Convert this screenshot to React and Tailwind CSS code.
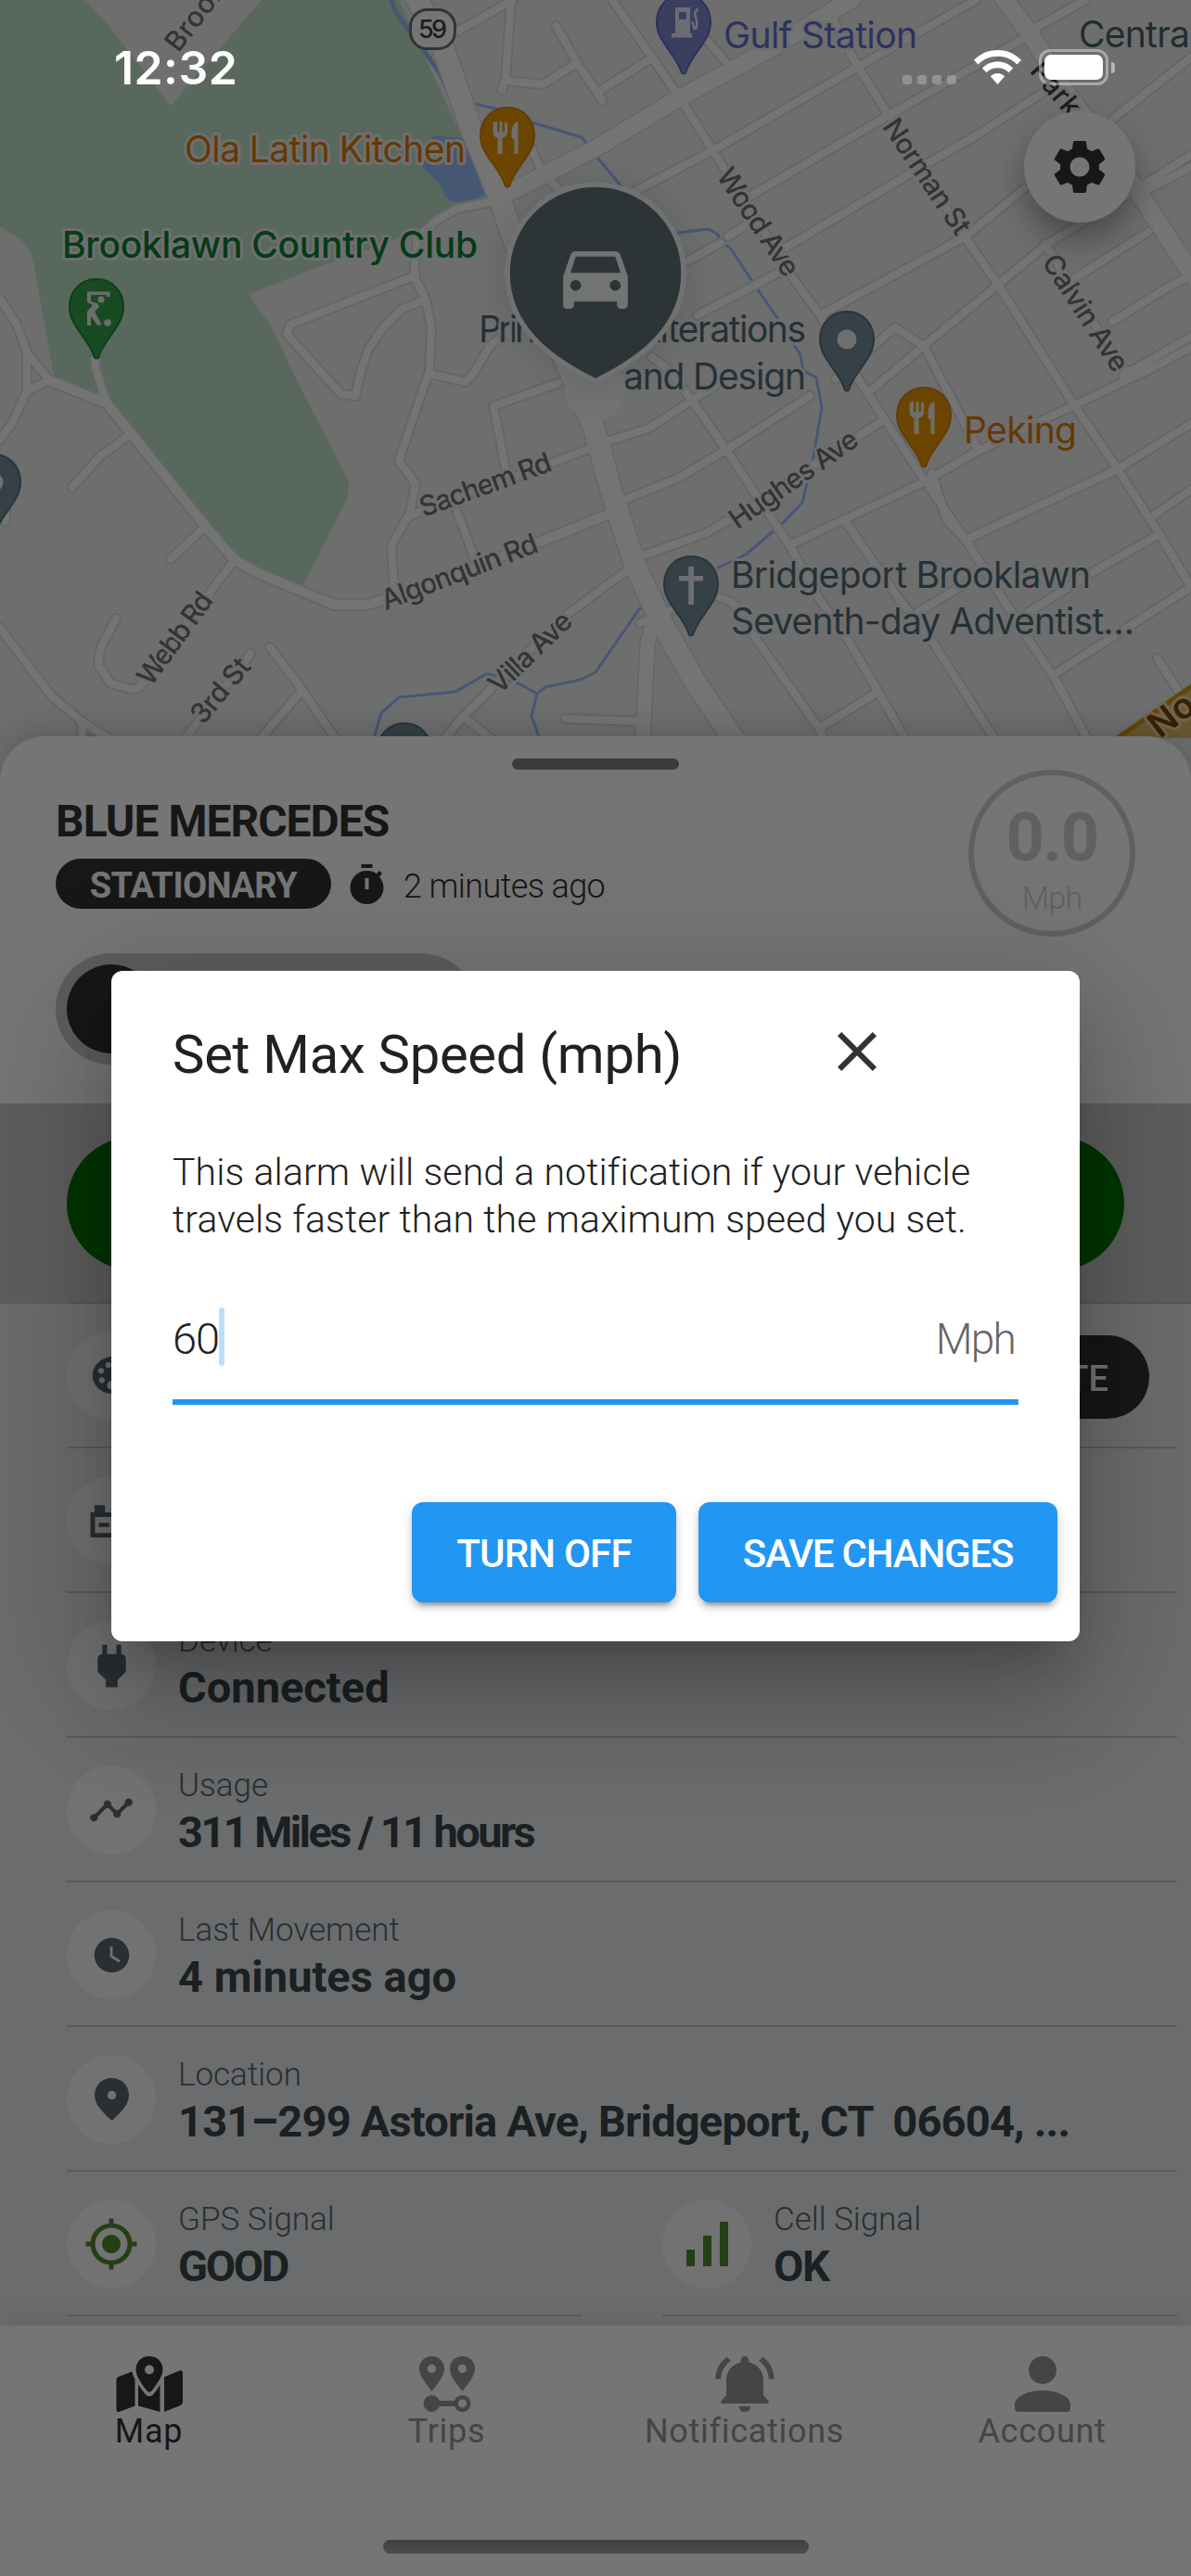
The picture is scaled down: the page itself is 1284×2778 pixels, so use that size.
import React from "react";
import { MdSettings, MdDirectionsCar, MdClose, MdTimeline, MdWatchLater, MdMyLocation } from "react-icons/md";
import { IoColorPalette } from "react-icons/io5";

/* ---------- Map ---------- */

const MINOR_ROADS = [
  "491,35 553,0",
  "551,0 545,85 541,97",
  "545,87 585,91 622,68 650,109",
  "600,28 622,68",
  "648,97 699,65",
  "573,160 585,187 602,203",
  "528,218 493,225 471,237 450,257 446,297 459,323 465,353 463,400 448,443 430,497 448,522 442,553 422,588 425,640",
  "463,403 502,412 512,400 528,373 552,355",
  "448,297 313,350 309,360 345,400 368,425 383,427 389,400 397,377 413,353 434,333 459,323",
  "0,322 18,350 29,380 29,422 12,458 0,474",
  "29,380 53,410",
  "29,422 53,410",
  "102,388 104,400 115,435",
  "141,468 108,492 78,525",
  "221,568 184,603",
  "252,605 227,638 150,742 141,743 119,737 106,717 108,700 125,667",
  "0,677 55,750 88,778 123,800",
  "88,780 89,800",
  "270,705 197,800",
  "291,698 325,743 364,800",
  "325,745 278,800",
  "442,556 598,498 640,482",
  "602,413 532,438 545,505",
  "493,552 512,603",
  "683,610 642,640 606,667 499,773 477,800",
  "502,775 534,800",
  "610,775 689,778",
  "6,540 6,562",
  "648,478 699,462 746,432 777,412",
  "671,540 732,515 783,485 873,427",
  "685,602 761,575 798,553 929,468 953,453",
  "901,409 965,353 996,373 1076,307 1129,263 1227,203 1284,167",
  "940,420 996,373 1010,400 1055,485",
  "851,588 996,520 1051,488 1158,437 1236,400 1284,375",
  "1041,582 1203,507 1284,457",
  "1135,728 1284,633",
  "1109,660 1178,617 1248,577",
  "1242,557 1284,528",
  "990,660 1035,633",
  "660,0 703,62 734,107 769,163 855,300 884,340 928,413 996,517 1041,582 1109,690 1135,728 1174,800",
  "703,385 722,400 746,432 783,485 851,588 884,647 916,693 945,743 978,800",
  "912,563 970,647 1006,693 1074,800",
  "765,640 790,650 818,693 884,787 889,800",
  "884,785 945,747",
  "690,672 730,655",
  "762,43 785,70",
  "896,18 925,72 957,123 1041,257 1076,307 1133,397 1158,437 1203,503 1248,573 1284,633",
  "1127,263 1211,400 1222,400",
  "683,207 769,162 925,72 1052,0",
  "806,213 957,125 1101,43",
  "1113,32 1170,0",
  "785,255 812,238",
  "738,283 777,262",
  "847,267 1002,175 1051,147 1129,97",
  "752,340 847,290",
  "884,340 1041,255 1105,203",
  "1200,128 1284,62",
  "1232,207 1284,180",
  "1154,303 1238,250",
  "1199,347 1262,308 1284,297",
  "1211,405 1284,363",
  "1005,510 1020,560 1041,582",
  "1248,710 1277,756",
];
const CLUB_ROAD = "53,410 115,435 141,467 221,567 252,603 278,618 360,652 395,652 414,647 581,585 642,560 660,553";
const MAIN_ROAD = "448,-4 477,50 506,133 536,207 560,275 614,400 640,460 660,533 685,610 714,673 748,733 793,800";
const DIAGONAL = "545,210 642,160 730,107 830,53 920,-2";
const PARK_AVE = "1082,-2 1113,40 1150,100 1227,207 1290,303";
const BROOK_AVE = "703,676 698,695 693,800";

const STREAMS = [
  "513,112 537,118 560,130 577,133 627,148 640,165 669,200",
  "730,251 764,247 774,253 777,262 787,267 812,305 838,343 863,383 866,400 880,407 886,439 877,492 865,542 843,565 804,598 773,613",
  "716,645 689,657 642,725 626,733 588,741 579,748 559,737 528,727 524,727 491,746 430,752 411,769 402,800",
  "579,748 573,772 583,800",
];

const MAP_LABELS = [
  { t: "Ola Latin Kitchen", x: 199, y: 175, w: 303, s: 39, c: "#df7b06" },
  { t: "Brooklawn Country Club", x: 67, y: 278, w: 448, s: 39, c: "#0d8232", wt: 500 },
  { t: "Gulf Station", x: 780, y: 52, w: 209, s: 39, c: "#626fce" },
  { t: "Centra", x: 1163, y: 51, w: 120, s: 39, c: "#48616c" },
  { t: "Prin", x: 516, y: 369, w: 62, s: 39, c: "#516c79" },
  { t: "Alterations", x: 686, y: 369, w: 183, s: 39, c: "#516c79" },
  { t: "and Design", x: 672, y: 420, w: 197, s: 39, c: "#516c79" },
  { t: "Peking", x: 1039, y: 478, w: 122, s: 39, c: "#df7b06" },
  { t: "Bridgeport Brooklawn", x: 788, y: 634, w: 388, s: 39, c: "#516c79" },
  { t: "Seventh-day Adventist…", x: 788, y: 684, w: 435, s: 39, c: "#516c79" },
];

const STREET_LABELS = [
  { t: "Brook", x: 210, y: 17, r: -52, w: 86 },
  { t: "Wood Ave", x: 818, y: 239, r: 56, w: 134 },
  { t: "Norman St", x: 1000, y: 190, r: 56, w: 144 },
  { t: "Calvin Ave", x: 1171, y: 337, r: 57, w: 144 },
  { t: "Park", x: 1139, y: 95, r: 50, w: 66, dark: true },
  { t: "Hughes Ave", x: 855, y: 516, r: -35, w: 162 },
  { t: "Sachem Rd", x: 523, y: 522, r: -20, w: 149 },
  { t: "Algonquin Rd", x: 495, y: 616, r: -21, w: 178 },
  { t: "Webb Rd", x: 188, y: 688, r: -54, w: 116 },
  { t: "3rd St", x: 237, y: 744, r: -50, w: 82 },
  { t: "Villa Ave", x: 571, y: 703, r: -44, w: 112 },
];

function Pin({ x, y, fill, edge, children }) {
  return (
    <g transform={`translate(${x} ${y})`}>
      <path
        d="M0 1C17 1 29 14 29 31c0 12-6 20-13 30-8 11-12 18-13.600 24-.6 2-4.200 2-4.800 0C-4 79-8 72-16 61-23 51-29 43-29 31-29 14-17 1 0 1Z"
        fill={fill}
        stroke={edge}
        strokeWidth="2"
      />
      {children}
    </g>
  );
}

function Cutlery() {
  return (
    <g fill="#f4f0ea">
      <path d="M-15.500 17v10c0 4 2.500 6 5 7v17h5V34c3-1 5.500-3 5.500-7V17h-3v10h-2.500V16h-3v11h-2.500V16Z" />
      <path d="M11.500 16C6 17 4.500 23 4.500 31c0 3 1 4 3 5v15h4Z" />
    </g>
  );
}

function CityMap() {
  return (
    <svg className="absolute inset-x-0 top-0 h-[860px] w-full" viewBox="0 0 1284 860" fontFamily="Inter, sans-serif">
      <rect width="1284" height="860" fill="#eff0f0" />
      <path
        d="M0 0H92L115 25 184 114 282 0H430L528 213 490 225 455 247 400 268 356 283 268 317 293 353 315 400 376 519 375 537 327 631 278 613 254 597 117 433 59 405 57 400 36 283 33 273Q28 262 20 257L0 244Z"
        fill="#bfe3cb"
      />
      <path d="M84 788 90 782 108 796H80Z" fill="#bfe3cb" />
      <path d="M455 180 467 146 504 150 523 208Q521 214 489 218L480 212 473 197Z" fill="#9abdfd" />
      <g fill="none" stroke="#9abdfd" strokeWidth="3" strokeLinejoin="round">
        <polyline points="422,0 426,12 454,50 475,80 487,107" strokeWidth="5" />
        {STREAMS.map((p) => (
          <polyline key={p} points={p} />
        ))}
      </g>
      <g fill="none" stroke="#d8dcde" strokeLinejoin="round" strokeLinecap="round">
        {MINOR_ROADS.map((p) => (
          <polyline key={p} points={p} strokeWidth="12" />
        ))}
        <polyline points={CLUB_ROAD} strokeWidth="14" />
        <polyline points={BROOK_AVE} strokeWidth="18" />
        <polyline points={DIAGONAL} strokeWidth="21" />
        <polyline points={PARK_AVE} strokeWidth="22" />
        <polyline points={MAIN_ROAD} strokeWidth="26" />
      </g>
      <g fill="none" stroke="#fdfdfd" strokeLinejoin="round" strokeLinecap="round">
        {MINOR_ROADS.map((p) => (
          <polyline key={p} points={p} strokeWidth="8" />
        ))}
        <polyline points={CLUB_ROAD} strokeWidth="10" />
        <polyline points={BROOK_AVE} strokeWidth="15" />
        <polyline points={DIAGONAL} strokeWidth="18" />
        <polyline points={PARK_AVE} strokeWidth="19" />
        <polyline points={MAIN_ROAD} strokeWidth="23" />
      </g>
      <path d="M1205 796 1286 740V796Z" fill="#e0c069" />
      <path d="M1203 797 1286 739" stroke="#d99a10" strokeWidth="5" />

      <rect x="442.500" y="10.500" width="48" height="42" rx="18" fill="#fdfefe" stroke="#6e7072" strokeWidth="3" />
      <text x="466.500" y="41" fontSize="27" textAnchor="middle" textLength="31" fill="#3f4244" fontWeight="500">59</text>

      <g stroke="#eff0f0" strokeWidth="6" strokeLinejoin="round">
        {STREET_LABELS.map((l) => (
          <text
            key={l.t}
            transform={`translate(${l.x} ${l.y}) rotate(${l.r})`}
            y="11"
            fontSize="30"
            fontWeight="500"
            textAnchor="middle"
            textLength={l.w}
            fill={l.dark ? "#3c3f42" : "#6c7276"}
            className="[paint-order:stroke]"
          >
            {l.t}
          </text>
        ))}
        <text transform="translate(1263 771) rotate(-38)" y="13" fontSize="38" fontWeight="600" textAnchor="middle" fill="#7c470c" stroke="#f3dfa8" className="[paint-order:stroke]">
          No
        </text>
        {MAP_LABELS.map((l) => (
          <text key={l.t} x={l.x} y={l.y} fontSize={l.s} fontWeight={l.wt || 400} textLength={l.w} fill={l.c} className="[paint-order:stroke]">
            {l.t}
          </text>
        ))}
      </g>

      <Pin x={547} y={115} fill="#ec9900" edge="#d98412"><Cutlery /></Pin>
      <Pin x={996} y={417} fill="#ec9900" edge="#d98412"><Cutlery /></Pin>
      <Pin x={104} y={300} fill="#38a34d" edge="#168a3a">
        <path d="M-10 14.500H14.500V20H11V18H-6V25L1 27 3 31-2 36 5.500 50 1 51-6 41V51H-10V36L-4 29-10 26Z" fill="#e9efe9" />
        <circle cx="5" cy="23" r="3.500" fill="#e9efe9" />
        <circle cx="12" cy="48" r="3.800" fill="#e9efe9" />
      </Pin>
      <Pin x={737} y={-7} fill="#7f88cf" edge="#5f6bc4">
        <path d="M-9 15H7V43H9V47.500H-13V43H-9ZM-5 20V28H3V20Z" fill="#eceef6" fillRule="evenodd" />
        <path d="M8 31c4 0 2 7 4 7s3-4 2-9l-2-7 3-6" fill="none" stroke="#eceef6" strokeWidth="2.600" />
      </Pin>
      <Pin x={913} y={335} fill="#758f9c" edge="#587381"><circle cy="31" r="10.500" fill="#eff2f3" /></Pin>
      <Pin x={-7} y={489} fill="#758f9c" edge="#587381"><circle cy="31" r="10.500" fill="#eff2f3" /></Pin>
      <Pin x={436} y={779} fill="#758f9c" edge="#587381" />
      <Pin x={745} y={599} fill="#758f9c" edge="#587381">
        <path d="M-2.800 12H3V22H13V27.500H3V53H-2.800V27.500H-13V22H-2.800Z" fill="#eff2f3" />
      </Pin>

      <circle cx="642" cy="420" r="33" fill="#fafafa" />
      <path
        d="M642 199a95 95 0 0 1 95 95c0 58-44 92-95 117-51-25-95-59-95-117a95 95 0 0 1 95-95Z"
        fill="#627279"
        stroke="#f5f6f6"
        strokeWidth="5.500"
        className="drop-shadow-[0_3px_20px_rgba(0,0,0,0.14)]"
      />
      <MdDirectionsCar x={595.5} y={251.5} size={93} color="#f8fafa" />
    </svg>
  );
}

/* ---------- Icons ---------- */

const CarBattery = () => (
  <svg viewBox="0 0 24 24" className="size-[54px]" fill="currentColor">
    <path fillRule="evenodd" d="M4 4.500V8H2V20H22V8H20V4.500H15V8H9V4.500ZM4.200 10.200H19.800V17.900H4.200ZM6 13V15H11V13ZM14 13V15H15.500V16.500H17.500V15H19V13H17.500V11.500H15.500V13Z" />
  </svg>
);
const Plug = () => (
  <svg viewBox="0 0 24 24" className="size-[61px]" fill="currentColor">
    <path d="M16 7V3h-2v4h-4V3H8v4c-1 0-2 1-2 2v5.500L9.500 18v3h5v-3l3.500-3.500V9c0-1-1-2-2-2" />
  </svg>
);
const Place = () => (
  <svg viewBox="0 0 37 46" className="h-[46px] w-[37px]" fill="currentColor">
    <path fillRule="evenodd" d="M18.500 0C8 0 0 8 0 18.500 0 29 9 37 18.500 46 28 37 37 29 37 18.500 37 8 29 0 18.500 0Zm0 13.800a4.700 4.700 0 1 1 0 9.400 4.700 4.700 0 0 1 0-9.400Z" />
  </svg>
);
const Bars = () => (
  <svg viewBox="0 0 45 48" className="h-[48px] w-[45px]" fill="currentColor">
    <path d="M0 30H9V48H0ZM18 15H27V48H18ZM36 0H45V48H36Z" />
  </svg>
);
const Stopwatch = () => (
  <svg viewBox="0 0 37 43" className="h-[43px] w-[37px]" fill="currentColor">
    <path d="M12.500 0H24.500V4H12.500Z" />
    <path fillRule="evenodd" d="M18.500 7c4 0 7.500 1.200 10.500 3.200L32 7l3 3-3 3.500C34.500 16.500 36.500 20.500 36.500 25a18 18 0 1 1-18-18Zm-2 8V27H20.500V15Z" />
  </svg>
);
const MapIcon = () => (
  <svg viewBox="0 0 72 60" className="h-[60px] w-[72px]" fill="currentColor">
    <path fillRule="evenodd" d="M36 0C27.500 0 21.500 6 21.500 14.500 21.500 22 29 31.500 33.500 37.500c1.200 1.500 3.800 1.500 5 0C43 31.500 50.500 22 50.500 14.500 50.500 6 44.500 0 36 0Zm0 9.500a5 5 0 1 1 0 10 5 5 0 0 1 0-10Z" />
    <path d="M17.500 16.500C18 20 19 22 20.500 24.500V53.500L4 59.800C2 60.500.5 59.500.5 57.500V26c0-2 1-3.300 2.500-4ZM24 30.500C27 35 30 39 32 41.500c2 2 6 2 8 0 3-4 6-8 7.500-11V60L24 53.500ZM52 22.500 68.500 15.500c2-.8 3.500.3 3.500 2.200V49c0 2-1 3.200-2.500 4L52 60Z" />
  </svg>
);
const TripsIcon = () => (
  <svg viewBox="0 0 60 60" className="size-[60px]" fill="currentColor">
    <path fillRule="evenodd" d="M13.500 0C6 0 0 5.500 0 13.500 0 22 8 30 13.500 38 19 30 27 22 27 13.500 27 5.500 21 0 13.500 0Zm0 8.800a4.700 4.700 0 1 1 0 9.400 4.700 4.700 0 0 1 0-9.400Z" />
    <path fillRule="evenodd" d="M46.500 0C39 0 33 5.500 33 13.500 33 22 41 30 46.500 38 52 30 60 22 60 13.500 60 5.500 54 0 46.500 0Zm0 8.800a4.700 4.700 0 1 1 0 9.400 4.700 4.700 0 0 1 0-9.400Z" />
    <circle cx="13.500" cy="51" r="9" />
    <path d="M18 48H40V54H18Z" />
    <circle cx="46.500" cy="51" r="6.800" fill="none" stroke="currentColor" strokeWidth="4.500" />
  </svg>
);
const BellIcon = () => (
  <svg viewBox="0 0 64 60" className="h-[60px] w-[64px]" fill="currentColor">
    <path d="M32 0c3 0 4.500 2 4.500 6.500C46 9 52 16 52 26V42L57.500 48V51H6.500V48L12 42V26C12 16 18 9 27.500 6.500 27.500 2 29 0 32 0ZM26 54H38C38 58 35.500 60 32 60 28.500 60 26 58 26 54Z" />
    <path d="M12.500.8 17 4.800C10 10 6.500 16.500 6.300 24.500H.3C.5 15 5 6.500 12.500.8ZM51.500.8 47 4.800C54 10 57.500 16.500 57.700 24.500H63.700C63.500 15 59 6.500 51.500.8Z" />
  </svg>
);
const AccountIcon = () => (
  <svg viewBox="0 0 60 60" className="size-[60px]" fill="currentColor">
    <circle cx="30" cy="15" r="15" />
    <path d="M30 37c15 0 30 6 30 15v4c0 2.500-1.500 4-4 4H4c-2.500 0-4-1.500-4-4v-4C0 43 15 37 30 37Z" />
  </svg>
);
const Wifi = () => (
  <svg viewBox="0 0 51 37" className="h-[37px] w-[51px]" fill="#fff">
    <path d="M25.500 0C35.500 0 44.500 4 51 10.800L46.500 15.500C41 9.900 33.700 6.800 25.500 6.800S10 9.900 4.500 15.500L0 10.800C6.500 4 15.500 0 25.500 0Z" />
    <path d="M25.500 12.500c6.500 0 12.300 2.600 16.700 7L37.500 24.300c-3.100-3.200-7.300-5-12-5s-8.900 1.800-12 5L8.800 19.500c4.400-4.400 10.200-7 16.700-7Z" />
    <path d="M25.500 25c3 0 5.700 1.300 7.700 3.300L25.500 37 17.800 28.300c2-2 4.700-3.300 7.700-3.300Z" />
  </svg>
);

/* ---------- Screen parts ---------- */

function StatusBar() {
  return (
    <div className="absolute inset-x-0 top-0 flex h-[120px] items-start pr-[82px] pl-[123px]">
      <span className="mt-[41px] font-[Inter,sans-serif] text-[50px] leading-[64px] font-semibold tracking-[0.4px] text-white">12:32</span>
      <div className="mt-[81px] ml-auto flex gap-[6px]">
        <i className="h-[10px] w-[10px] rounded-[3px] bg-white/25" />
        <i className="h-[10px] w-[10px] rounded-[3px] bg-white/25" />
        <i className="h-[10px] w-[10px] rounded-[3px] bg-white/25" />
        <i className="h-[10px] w-[10px] rounded-[3px] bg-white/25" />
      </div>
      <div className="mt-[54px] ml-[19px]">
        <Wifi />
      </div>
      <div className="mt-[53px] ml-[19px] flex items-center gap-[3px]">
        <div className="h-[39px] w-[75px] rounded-[12px] border-[3px] border-white/40 p-[3px]">
          <div className="h-full w-full rounded-[7px] bg-white" />
        </div>
        <i className="h-[12px] w-[4px] rounded-r-full bg-white/50" />
      </div>
    </div>
  );
}

function Vehicle() {
  return (
    <section className="relative h-[396px] rounded-t-[48px] bg-white pt-6 pr-[60px] pl-[60px] shadow-[0_-6px_36px_rgba(0,0,0,0.18)]">
      <div className="mx-auto h-3 w-[180px] rounded-full bg-[#828282]" />
      <div className="flex justify-between">
        <div className="pt-7 text-[#343434]">
          <h1 className="text-[48px] leading-[56px] font-bold tracking-[-1px]">BLUE MERCEDES</h1>
          <div className="mt-3 flex h-[54px] items-center">
            <span className="flex h-[54px] w-[297px] items-center justify-center rounded-full bg-[#343434] pt-[3px] text-[38px] leading-none font-bold tracking-[-0.5px] text-white">
              STATIONARY
            </span>
            <span className="ml-5">
              <Stopwatch />
            </span>
            <span className="ml-[21px] pt-[5px] text-[36px] leading-[44px] font-[350] tracking-[-0.6px]">2 minutes ago</span>
          </div>
          <div className="mt-12 h-[120px] w-[454px] rounded-full bg-[#cacaca] p-3">
            <div className="size-24 rounded-full bg-[#343434]" />
          </div>
        </div>
        <div className="flex size-[180px] flex-col items-center rounded-full border-[6px] border-[#d1d1d1] pt-8 text-[#d1d1d1]">
          <span className="text-[72px] leading-[72px] font-bold tracking-[-1.5px]">0.0</span>
          <span className="mt-2 text-[34px] leading-[40px] font-light tracking-[-0.8px]">Mph</span>
        </div>
      </div>
    </section>
  );
}

function Row({ icon, green, label, value, tracking = "tracking-normal", children }) {
  return (
    <div className="flex h-[156px] items-start border-b-2 border-[#c3c5c9]">
      <div className={"mt-[30px] flex size-24 shrink-0 items-center justify-center rounded-full bg-[#f9f9f8] " + (green ? "text-[#50892d]" : "text-[#5b6870]")}>
        {icon}
      </div>
      {label && (
        <div className="ml-6 pt-[30px] whitespace-pre">
          <div className="text-[35px] leading-[44px] font-light text-[#57666e]">{label}</div>
          <div className={"text-[47px] leading-[56px] font-bold text-[#3b464b] " + tracking}>{value}</div>
        </div>
      )}
      {children}
    </div>
  );
}

function Details() {
  return (
    <section className="h-[1102px] bg-[#e9ebef] pr-[15px] pl-[72px]">
      <Row icon={<IoColorPalette size={50} className="-translate-y-px" />}>
        <span className="mt-[34px] mr-[30px] ml-auto flex h-[90px] items-center rounded-full bg-[#343434] px-[44px] pt-[3px] text-[38px] leading-none font-medium text-white">UPDATE</span>
      </Row>
      <Row icon={<CarBattery />} />
      <Row icon={<Plug />} label="Device" value="Connected" />
      <Row icon={<MdTimeline size={50} />} label="Usage" value="311 Miles / 11 hours" tracking="tracking-[-2.6px]" />
      <Row icon={<MdWatchLater size={45} />} label="Last Movement" value="4 minutes ago" />
      <Row icon={<Place />} label="Location" value="131–299 Astoria Ave, Bridgeport, CT  06604, ..." tracking="tracking-[-0.8px]" />
      <div className="grid grid-cols-2 gap-[87px]">
        <Row green icon={<MdMyLocation size={60} />} label="GPS Signal" value="GOOD" tracking="tracking-[-2.4px]" />
        <Row green icon={<Bars />} label="Cell Signal" value="OK" tracking="tracking-[-1.5px]" />
      </div>
    </section>
  );
}

function Tab({ icon, label, active }) {
  return (
    <div className={"flex flex-1 flex-col items-center " + (active ? "text-[#343434]" : "text-[#969696]")}>
      {icon}
      <span className="mt-px text-[36px] leading-[40px] font-normal tracking-[0.7px]">{label}</span>
    </div>
  );
}

function BottomNav() {
  return (
    <nav className="relative flex h-[270px] flex-col items-center bg-white pt-[33px] pb-6 shadow-[0_-6px_30px_rgba(0,0,0,0.08)]">
      <div className="flex w-full">
        <Tab active icon={<MapIcon />} label="Map" />
        <Tab icon={<TripsIcon />} label="Trips" />
        <Tab icon={<BellIcon />} label="Notifications" />
        <Tab icon={<AccountIcon />} label="Account" />
      </div>
      <div className="mt-auto h-[15px] w-[459px] rounded-full bg-linear-to-b from-[#8d8d8d] to-[#a8a8a8]" />
    </nav>
  );
}

function SpeedDialog() {
  return (
    <div className="h-[723px] w-[1044px] rounded-[12px] bg-white pt-[51px] text-[#212121] shadow-[0_33px_45px_-21px_rgba(0,0,0,0.2),0_72px_114px_9px_rgba(0,0,0,0.14),0_27px_138px_24px_rgba(0,0,0,0.12)]">
      <div className="flex h-[72px] items-center justify-between pr-[204px] pl-[66px]">
        <h2 className="pt-[5px] text-[58px] leading-[72px] font-[450] tracking-[-0.3px] whitespace-nowrap">Set Max Speed (mph)</h2>
        <MdClose size={72} color="#333333" />
      </div>
      <p className="mt-[69px] px-[66px] text-[41px] leading-[51px] font-[350] tracking-[0.1px] whitespace-nowrap">
        This alarm will send a notification if your vehicle
        <br />
        travels faster than the maximum speed you set.
      </p>
      <div className="mx-[66px] mt-[69px] flex h-[105px] items-start border-b-[6px] border-[#2196f3] text-[47px] leading-[63px] font-[350]">
        <span className="pt-[2px] tracking-[-1px]">60</span>
        <i className="h-[63px] w-[6px] rounded-full bg-[#bbdefb]" />
        <span className="ml-auto pt-[3px] pr-1 text-[46px] font-[330] tracking-[-1.8px] text-[#666666]">Mph</span>
      </div>
      <div className="mt-[105px] flex justify-end gap-6 pr-6 text-[42px] leading-none font-medium text-white">
        <button className="h-[108px] w-[285px] rounded-[12px] bg-[#2196f3] pt-[4px] tracking-[-0.8px] shadow-[0_9px_3px_-6px_rgba(0,0,0,0.2),0_6px_6px_rgba(0,0,0,0.14),0_3px_15px_rgba(0,0,0,0.12)]">TURN OFF</button>
        <button className="h-[108px] w-[387px] rounded-[12px] bg-[#2196f3] pt-[4px] tracking-[-1.2px] shadow-[0_9px_3px_-6px_rgba(0,0,0,0.2),0_6px_6px_rgba(0,0,0,0.14),0_3px_15px_rgba(0,0,0,0.12)]">SAVE CHANGES</button>
      </div>
    </div>
  );
}

export default function App() {
  return (
    <main className="relative flex h-[2778px] w-[1284px] flex-col overflow-hidden bg-white font-[Roboto,sans-serif]">
      <div className="relative h-[794px]">
        <CityMap />
        <button className="absolute top-[120px] right-[60px] flex size-[120px] items-center justify-center rounded-full bg-white text-[#343434] shadow-[0_18px_36px_rgba(0,0,0,0.35)]">
          <MdSettings size={70} />
        </button>
      </div>
      <Vehicle />
      <section className="relative h-[216px] bg-[#cccccc] px-[72px] pt-9">
        <div className="h-36 rounded-full bg-[#007300]" />
        <div className="mt-[34px] -mr-[72px] ml-[3px] h-[2px] bg-[#bcbcbc]" />
      </section>
      <Details />
      <BottomNav />
      <div className="absolute inset-0 flex items-start justify-center bg-black/54 pt-[1047px]">
        <SpeedDialog />
      </div>
      <StatusBar />
    </main>
  );
}
